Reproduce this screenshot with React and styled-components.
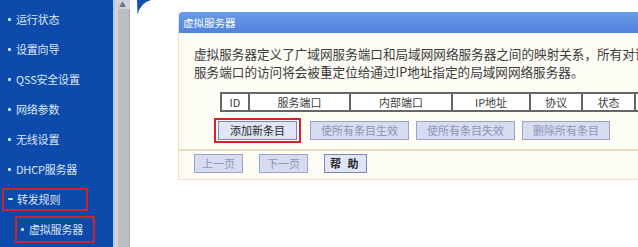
import styled, { createGlobalStyle } from 'styled-components';

const GlobalStyle = createGlobalStyle`
  html, body {
    margin: 0;
    padding: 0;
    background: #ffffff;
  }
  body {
    font-family: "Noto Sans CJK SC", "Liberation Sans", sans-serif;
  }
`;

const Page = styled.div`
  display: flex;
  width: 638px;
  height: 247px;
  overflow: hidden;
`;

const Nav = styled.ul`
  width: 113px;
  flex-shrink: 0;
  margin: 0;
  padding: 4px 0 0 0;
  list-style: none;
  background: #0c4aab;
`;

const NavItem = styled.li`
  display: flex;
  align-items: center;
  height: 30px;
  padding-left: ${(p) => p.$indent}px;
`;

const Frame = styled.div`
  display: flex;
  align-items: center;
  box-sizing: border-box;
  height: ${(p) => (p.$sub ? 27 : 23)}px;
  width: ${(p) => (p.$w ? `${p.$w}px` : 'auto')};
  border: 2px solid ${(p) => (p.$mark ? '#d6202a' : 'transparent')};
  padding-left: 4px;
`;

const Marker = styled.span`
  width: ${(p) => (p.$dash ? 5 : 3)}px;
  height: ${(p) => (p.$dash ? 2 : 3)}px;
  margin-right: ${(p) => (p.$dash ? 4 : 5)}px;
  background: #cfe6f5;
  border-radius: 1px;
`;

const Label = styled.span`
  color: #dfe7f3;
  font-size: 11px;
  letter-spacing: -0.2px;
  white-space: nowrap;
`;

const Scrollbar = styled.div`
  width: 17px;
  flex-shrink: 0;
  display: flex;
  flex-direction: column;
  border-left: 2px solid #a9cdef;
  box-sizing: border-box;
  background: linear-gradient(to right, #d4d4d4 0, #d4d4d4 3px, #bdbdbd 3px, #bdbdbd 14px, #a9a9a9 14px);
`;

const ScrollArrow = styled.div`
  height: 9px;
  display: flex;
  justify-content: center;
  align-items: center;
  background: #cfd3d8;
  color: #6b7280;
  font-size: 7px;
  line-height: 1;
`;

const Main = styled.div`
  flex: 1;
  position: relative;
  padding: 12px 0 0 48px;
  overflow: hidden;
`;

const Swoosh = styled.svg`
  position: absolute;
  top: 0;
  left: 7px;
`;

const Panel = styled.section`
  width: 560px;
  background: #fdfcf5;
  border-left: 1px solid #eadfc4;
  border-bottom: 1px solid #eadfc4;
`;

const PanelHead = styled.div`
  height: 21px;
  display: flex;
  align-items: center;
  padding-left: 4px;
  background: linear-gradient(to bottom, #6a9ae6, #4f84dc);
  border-radius: 4px 0 0 0;
  color: #ffffff;
  font-size: 10.5px;
`;

const PanelBody = styled.div`
  padding: 12px 0 0 15px;
`;

const Intro = styled.p`
  margin: 0;
  font-size: 12.6px;
  line-height: 18px;
  color: #3a3a3a;
  white-space: nowrap;
`;

const Table = styled.table`
  margin: 11px 0 0 26px;
  border-collapse: collapse;
  background: #ffffff;
  table-layout: fixed;
`;

const Th = styled.th`
  width: ${(p) => p.$w}px;
  height: 16px;
  padding: 0;
  border: 2px solid #666666;
  font-size: 11px;
  font-weight: normal;
  color: #3d3d3d;
  text-align: center;
`;

const ButtonRow = styled.div`
  display: flex;
  align-items: center;
  gap: 7px;
  margin: 6px 0 0 20px;
  height: 25px;
`;

const Mark = styled.div`
  display: flex;
  box-sizing: border-box;
  height: 25px;
  padding: 1px 2px;
  border: 2.5px solid #d6202a;
  margin-right: 2px;
`;

const Button = styled.button`
  height: 19px;
  margin: 0;
  padding: 0 ${(p) => p.$pad ?? 10}px;
  font-family: inherit;
  font-size: 11px;
  line-height: 17px;
  letter-spacing: ${(p) => p.$spread ?? 0}px;
  font-weight: ${(p) => (p.$bold ? 'bold' : 'normal')};
  color: ${(p) => (p.disabled ? '#8d94ba' : '#2a2a2a')};
  background: ${(p) => (p.disabled ? '#d8dcf1' : '#e1e5f5')};
  border: 1px solid ${(p) => (p.disabled ? '#9ba3c8' : '#7d86ae')};
  white-space: nowrap;
`;

const Divider = styled.div`
  height: 2px;
  margin-top: 6px;
  background: #eee0bf;
`;

const FooterRow = styled.div`
  display: flex;
  gap: 16px;
  padding-top: 3px;
  padding-bottom: 6px;
  padding-left: 15px;
`;

const navItems = [
  { label: '运行状态' },
  { label: '设置向导' },
  { label: 'QSS安全设置' },
  { label: '网络参数' },
  { label: '无线设置' },
  { label: 'DHCP服务器' },
  { label: '转发规则', dash: true, mark: true, w: 86 },
  { label: '虚拟服务器', sub: true, mark: true, w: 80 },
];

const columns = [
  { name: 'ID', w: 26 },
  { name: '服务端口', w: 99 },
  { name: '内部端口', w: 100 },
  { name: 'IP地址', w: 76 },
  { name: '协议', w: 50 },
  { name: '状态', w: 51 },
  { name: '', w: 60 },
];

function App() {
  return (
    <>
      <GlobalStyle />
      <Page>
        <Nav>
          {navItems.map((item) => (
            <NavItem key={item.label} $indent={item.sub ? 15 : 2}>
              <Frame $mark={item.mark} $w={item.w} $sub={item.sub}>
                <Marker $dash={item.dash} />
                <Label>{item.label}</Label>
              </Frame>
            </NavItem>
          ))}
        </Nav>
        <Scrollbar>
          <ScrollArrow>▲</ScrollArrow>
        </Scrollbar>
        <Main>
          <Swoosh width="14" height="15" viewBox="0 0 14 15">
            <path d="M0 0 L14 0 Q3 3 0.5 15 Z" fill="#1550b8" />
          </Swoosh>
          <Panel>
            <PanelHead>虚拟服务器</PanelHead>
            <PanelBody>
              <Intro>虚拟服务器定义了广域网服务端口和局域网网络服务器之间的映射关系，所有对该广域网</Intro>
              <Intro>服务端口的访问将会被重定位给通过IP地址指定的局域网网络服务器。</Intro>
              <Table>
                <thead>
                  <tr>
                    {columns.map((c, i) => (
                      <Th key={i} $w={c.w}>{c.name}</Th>
                    ))}
                  </tr>
                </thead>
              </Table>
              <ButtonRow>
                <Mark>
                  <Button $pad={11}>添加新条目</Button>
                </Mark>
                <Button disabled>使所有条目生效</Button>
                <Button disabled>使所有条目失效</Button>
                <Button disabled>删除所有条目</Button>
              </ButtonRow>
            </PanelBody>
            <Divider />
            <FooterRow>
              <Button disabled $pad={7}>上一页</Button>
              <Button disabled $pad={7}>下一页</Button>
              <Button $bold $pad={5} $spread={2}>帮 助</Button>
            </FooterRow>
          </Panel>
        </Main>
      </Page>
    </>
  );
}

export default App;
